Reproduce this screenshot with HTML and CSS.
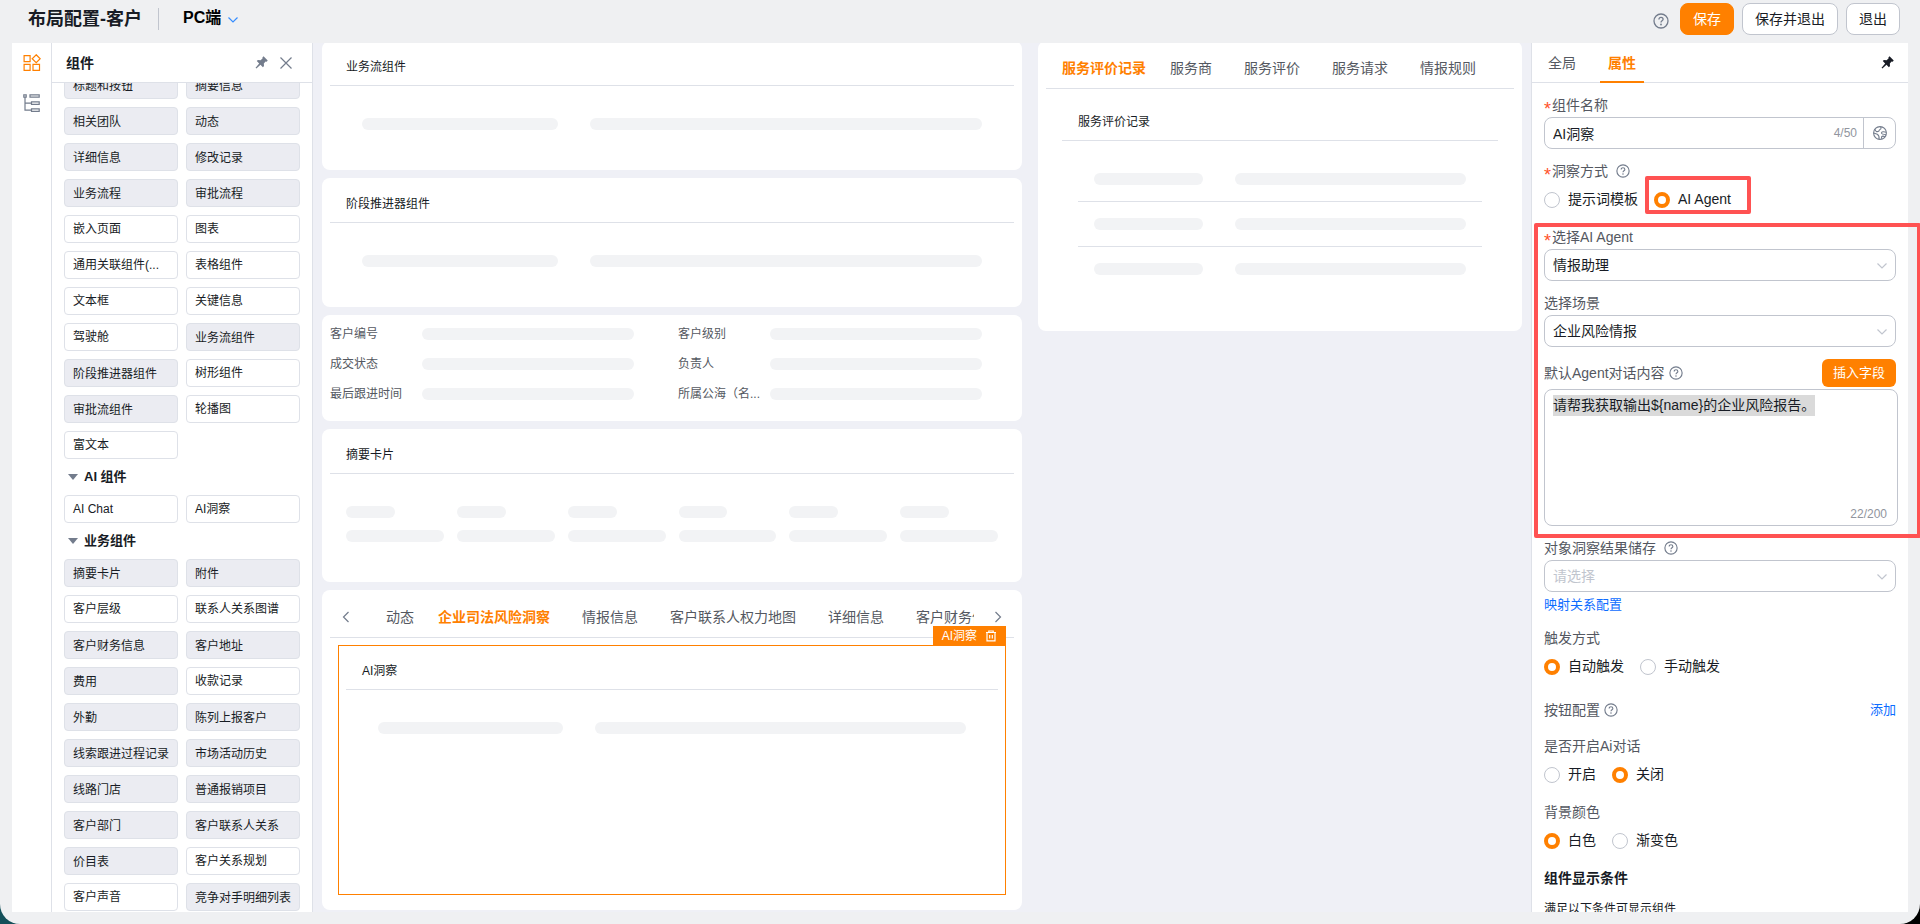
FILE: index.html
```html
<!DOCTYPE html>
<html lang="zh-CN">
<head>
<meta charset="utf-8">
<title>布局配置-客户</title>
<link rel="stylesheet" href="styles.css">
</head>
<body>
<svg class="sprite" aria-hidden="true">
  <symbol id="i-help" viewBox="0 0 16 16"><circle cx="8" cy="8" r="7" fill="none" stroke="currentColor" stroke-width="1.3"/><path d="M5.900 6.400C5.900 5.100 6.800 4.300 8 4.300s2.100.8 2.100 1.900c0 1.500-2.100 1.600-2.100 3.200" fill="none" stroke="currentColor" stroke-width="1.300"/><circle cx="8" cy="11.500" r=".9" fill="currentColor"/></symbol>
  <symbol id="i-pin" viewBox="0 0 14 14"><path d="M8 1.600 9.200.400l4.500 4.500-1.100 1.200-1.200-.2-1.900 2.100.2 2.900-1.200 1.200-2.600-2.600L1.500 13.500l-.9-.9 3.900-4.500L1.900 5.500l1.200-1.200 2.900.2 2.100-1.900z" fill="currentColor"/></symbol>
  <symbol id="i-down" viewBox="0 0 12 8"><path d="M1.500 1.500 6 6l4.500-4.500" fill="none" stroke="currentColor" stroke-width="1.200"/></symbol>
</svg>
<div class="page">
  <header class="topbar">
    <h1 class="topbar-title">布局配置-客户</h1>
    <button class="terminal" type="button">PC端<svg class="terminal-arrow"><use href="#i-down"/></svg></button>
    <div class="topbar-actions">
      <svg class="help help-large"><use href="#i-help"/></svg>
      <button class="btn btn-primary" type="button">保存</button>
      <button class="btn" type="button">保存并退出</button>
      <button class="btn" type="button">退出</button>
    </div>
  </header>

  <div class="workspace">
    <nav class="rail">
      <button class="rail-btn active" type="button" aria-label="组件"><svg viewBox="0 0 18 18"><g fill="none" stroke="currentColor" stroke-width="1.200"><path d="M1.100 1.600h6v6h-6zM1.100 10.400h6v6h-6zM10 10.400h6.500v6H10zM13.200.8l4 3.900-4 3.900-4-3.900z"/></g></svg></button>
      <button class="rail-btn" type="button" aria-label="大纲"><svg viewBox="0 0 18 18"><g fill="none" stroke="currentColor" stroke-width="1.200"><path d="M.8.800h2.400v2.400H.8zM7 .800h9.200v2.400H7zM8.500 7.800h7.700v2.600H8.500zM8.500 14.800h7.700v2.600H8.500zM2 3.200v12.900h6.500M2 9.100h6.500"/></g></svg></button>
    </nav>

    <section class="library">
      <div class="library-head">
        <h2>组件</h2>
        <button class="icon-btn" type="button" aria-label="固定"><svg class="pin"><use href="#i-pin"/></svg></button>
        <button class="icon-btn" type="button" aria-label="关闭"><svg class="close" viewBox="0 0 12 12"><path d="M.5.5l11 11M11.500.5l-11 11" fill="none" stroke="currentColor" stroke-width="1.200"/></svg></button>
      </div>
      <div class="library-scroll">
        <div class="chips chips-scrolled">
          <span class="chip used">标题和按钮</span><span class="chip used">摘要信息</span>
          <span class="chip used">相关团队</span><span class="chip used">动态</span>
          <span class="chip used">详细信息</span><span class="chip used">修改记录</span>
          <span class="chip used">业务流程</span><span class="chip used">审批流程</span>
          <span class="chip">嵌入页面</span><span class="chip">图表</span>
          <span class="chip">通用关联组件(...</span><span class="chip">表格组件</span>
          <span class="chip">文本框</span><span class="chip">关键信息</span>
          <span class="chip">驾驶舱</span><span class="chip used">业务流组件</span>
          <span class="chip used">阶段推进器组件</span><span class="chip">树形组件</span>
          <span class="chip used">审批流组件</span><span class="chip">轮播图</span>
          <span class="chip">富文本</span>
        </div>
        <h3 class="group">AI 组件</h3>
        <div class="chips">
          <span class="chip">AI Chat</span><span class="chip">AI洞察</span>
        </div>
        <h3 class="group">业务组件</h3>
        <div class="chips">
          <span class="chip used">摘要卡片</span><span class="chip used">附件</span>
          <span class="chip">客户层级</span><span class="chip">联系人关系图谱</span>
          <span class="chip used">客户财务信息</span><span class="chip used">客户地址</span>
          <span class="chip used">费用</span><span class="chip">收款记录</span>
          <span class="chip used">外勤</span><span class="chip used">陈列上报客户</span>
          <span class="chip used">线索跟进过程记录</span><span class="chip used">市场活动历史</span>
          <span class="chip used">线路门店</span><span class="chip used">普通报销项目</span>
          <span class="chip used">客户部门</span><span class="chip used">客户联系人关系</span>
          <span class="chip used">价目表</span><span class="chip">客户关系规划</span>
          <span class="chip">客户声音</span><span class="chip used">竞争对手明细列表</span>
        </div>
      </div>
    </section>

    <main class="canvas">
      <div class="column">
        <article class="card">
          <h4 class="card-title">业务流组件</h4>
          <div class="bars"><i class="bar"></i><i class="bar wide"></i></div>
        </article>
        <article class="card">
          <h4 class="card-title">阶段推进器组件</h4>
          <div class="bars"><i class="bar"></i><i class="bar wide"></i></div>
        </article>
        <article class="card summary">
          <div class="pair"><span>客户编号</span><i class="bar"></i></div><div class="pair"><span>客户级别</span><i class="bar"></i></div>
          <div class="pair"><span>成交状态</span><i class="bar"></i></div><div class="pair"><span>负责人</span><i class="bar"></i></div>
          <div class="pair"><span>最后跟进时间</span><i class="bar"></i></div><div class="pair"><span>所属公海（名...</span><i class="bar"></i></div>
        </article>
        <article class="card">
          <h4 class="card-title">摘要卡片</h4>
          <div class="stats">
            <div class="stat"><i class="bar half"></i><i class="bar"></i></div>
            <div class="stat"><i class="bar half"></i><i class="bar"></i></div>
            <div class="stat"><i class="bar half"></i><i class="bar"></i></div>
            <div class="stat"><i class="bar half"></i><i class="bar"></i></div>
            <div class="stat"><i class="bar half"></i><i class="bar"></i></div>
            <div class="stat"><i class="bar half"></i><i class="bar"></i></div>
          </div>
        </article>
        <article class="card">
          <div class="tabbar">
            <button class="tab-arrow prev" type="button" aria-label="上一页"><svg viewBox="0 0 8 12"><path d="M6.500 1 1.500 6l5 5" fill="none" stroke="currentColor" stroke-width="1.200"/></svg></button>
            <div class="tabs tabs-paged">
              <button class="tab" type="button">动态</button>
              <button class="tab active" type="button">企业司法风险洞察</button>
              <button class="tab" type="button">情报信息</button>
              <button class="tab" type="button">客户联系人权力地图</button>
              <button class="tab" type="button">详细信息</button>
              <button class="tab" type="button">客户财务信息</button>
            </div>
            <button class="tab-arrow" type="button" aria-label="下一页"><svg viewBox="0 0 8 12"><path d="M1.500 1l5 5-5 5" fill="none" stroke="currentColor" stroke-width="1.200"/></svg></button>
          </div>
          <div class="selected">
            <div class="badge">AI洞察<svg viewBox="0 0 12 12"><path d="M1 2.500h10M3.800 2.300V1h4.400v1.300M2 2.700v8.200h8V2.700M4.700 5v3.500M7.300 5v3.500" fill="none" stroke="currentColor" stroke-width="1.200"/></svg></div>
            <h4 class="card-title">AI洞察</h4>
            <div class="bars"><i class="bar"></i><i class="bar wide"></i></div>
          </div>
        </article>
      </div>

      <div class="column">
        <article class="card">
          <div class="tabbar">
            <div class="tabs">
              <button class="tab active" type="button">服务评价记录</button>
              <button class="tab" type="button">服务商</button>
              <button class="tab" type="button">服务评价</button>
              <button class="tab" type="button">服务请求</button>
              <button class="tab" type="button">情报规则</button>
            </div>
          </div>
          <div class="nested">
            <h4 class="card-title">服务评价记录</h4>
            <div class="rows">
              <div class="row"><i class="bar"></i><i class="bar wide"></i></div>
              <div class="row"><i class="bar"></i><i class="bar wide"></i></div>
              <div class="row"><i class="bar"></i><i class="bar wide"></i></div>
            </div>
          </div>
        </article>
      </div>
    </main>

    <aside class="props">
      <div class="props-tabs">
        <button class="props-tab" type="button">全局</button>
        <button class="props-tab active" type="button">属性</button>
        <button class="icon-btn dark" type="button" aria-label="固定"><svg class="pin"><use href="#i-pin"/></svg></button>
      </div>
      <form class="form">
        <div class="field">
          <label class="label required" for="name">组件名称</label>
          <div class="input-group">
            <input class="input" id="name" type="text" value="AI洞察">
            <span class="count">4/50</span>
            <button class="addon" type="button" aria-label="多语言"><svg viewBox="0 0 14 14"><g fill="none" stroke="currentColor" stroke-width="1.100"><circle cx="7" cy="7" r="6.400"/><path d="M1.800 3.200c.7 2.300 2 2.900 3.900 2.100.6-1.700 1.200-1.600 2.100-2.500C8.300 2 7.800 1.300 7.800.7M.7 6.900l3.600 1.400c1.600.9 2.100 2.600 1.700 5M13.300 6.200c-2.700-.9-4.600-.6-4.900.8.300 1.300 2.200 1.500 4.700 1.700M11.900 10.800c-1.400-.9-2.700-.9-3.300.1-.2.800 0 1.500.4 2.100"/></g></svg></button>
          </div>
        </div>
        <div class="field">
          <span class="label required">洞察方式<svg class="help spaced"><use href="#i-help"/></svg></span>
          <div class="radios">
            <label><input type="radio" name="mode">提示词模板</label>
            <label><input type="radio" name="mode" checked>AI Agent</label>
          </div>
        </div>
        <div class="field">
          <label class="label required" for="agent">选择AI Agent</label>
          <div class="select-box"><select class="select" id="agent"><option>情报助理</option></select><svg><use href="#i-down"/></svg></div>
        </div>
        <div class="field">
          <label class="label" for="scene">选择场景</label>
          <div class="select-box"><select class="select" id="scene"><option>企业风险情报</option></select><svg><use href="#i-down"/></svg></div>
        </div>
        <div class="field">
          <div class="label-row">
            <label class="label" for="prompt">默认Agent对话内容<svg class="help"><use href="#i-help"/></svg></label>
            <button class="btn-insert" type="button">插入字段</button>
          </div>
          <div class="textarea-box">
            <textarea class="textarea" id="prompt" spellcheck="false">请帮我获取输出${name}的企业风险报告。</textarea>
            <span class="textarea-count">22/200</span>
          </div>
        </div>
        <div class="field linked">
          <label class="label" for="store">对象洞察结果储存<svg class="help spaced"><use href="#i-help"/></svg></label>
          <div class="select-box"><select class="select empty" id="store"><option>请选择</option></select><svg><use href="#i-down"/></svg></div>
          <a class="link mapping" href="#">映射关系配置</a>
        </div>
        <div class="field trigger">
          <span class="label">触发方式</span>
          <div class="radios">
            <label><input type="radio" name="trigger" checked>自动触发</label>
            <label><input type="radio" name="trigger">手动触发</label>
          </div>
        </div>
        <div class="field buttons">
          <span class="label">按钮配置<svg class="help"><use href="#i-help"/></svg></span>
          <a class="link" href="#">添加</a>
        </div>
        <div class="field">
          <span class="label">是否开启Ai对话</span>
          <div class="radios">
            <label><input type="radio" name="chat">开启</label>
            <label><input type="radio" name="chat" checked>关闭</label>
          </div>
        </div>
        <div class="field">
          <span class="label">背景颜色</span>
          <div class="radios">
            <label><input type="radio" name="bg" checked>白色</label>
            <label><input type="radio" name="bg">渐变色</label>
          </div>
        </div>
        <h3 class="section">组件显示条件</h3>
        <p class="note">满足以下条件可显示组件</p>
      </form>
      <div class="mark mark-mode"></div>
      <div class="mark mark-agent"></div>
    </aside>
  </div>
</div>
</body>
</html>
```

FILE: styles.css
```css
* { box-sizing: border-box; }

body {
  margin: 0;
  height: 100vh;
  overflow: hidden;
  background: linear-gradient(90deg, #14505a 0, #14505a 24px, #000 48px);
  color: #181c25;
  font: 14px/20px "Liberation Sans", "Noto Sans CJK SC", sans-serif;
}

button, input, select, textarea { font: inherit; color: inherit; }
button { padding: 0; border: 0; background: none; white-space: nowrap; cursor: pointer; }
h1, h2, h3, h4, p { margin: 0; }
svg { display: block; flex: none; }
.sprite { position: absolute; width: 0; height: 0; }

.page {
  display: flex;
  flex-direction: column;
  height: 100%;
  padding: 0 12px 12px;
  border-radius: 0 0 20px 20px;
  background: #eff0f2;
}

/* Top bar */
.topbar { display: flex; flex: none; height: 43px; padding: 3px 8px 0 16px; }
.topbar-title {
  height: 22px;
  margin-top: 5px;
  padding-right: 16px;
  border-right: 1px solid #c1c5ce;
  font-size: 18px;
  font-weight: 600;
  line-height: 22px;
}
.terminal {
  display: flex;
  align-items: center;
  gap: 6px;
  height: 24px;
  margin: 3px 0 0 24px;
  color: #000;
  font-size: 16px;
  font-weight: 600;
}
.terminal-arrow { width: 12px; height: 8px; margin-top: 3px; color: #368dff; }
.topbar-actions { display: flex; gap: 8px; margin-left: auto; }
.help { width: 14px; height: 14px; color: #737c8c; }
.help-large { width: 16px; height: 16px; margin: 10px 3px 0 0; }
.btn {
  height: 32px;
  padding: 0 12px;
  border: 1px solid #c1c5ce;
  border-radius: 8px;
  background: #fff;
}
.btn-primary { border-color: #ff8000; background: #ff8000; color: #fff; }

.workspace { display: flex; flex: 1; min-height: 0; }

/* Icon rail */
.rail {
  display: flex;
  flex: none;
  flex-direction: column;
  align-items: center;
  gap: 22px;
  width: 40px;
  padding-top: 11px;
  border-right: 1px solid #dee1e8;
  background: #fff;
}
.rail-btn { color: #737c8c; }
.rail-btn svg { width: 18px; height: 18px; }
.rail-btn.active { color: #ff8000; }

/* Component library */
.library {
  display: flex;
  flex: none;
  flex-direction: column;
  width: 261px;
  border-right: 1px solid #dee1e8;
  background: #fff;
}
.library-head {
  display: flex;
  flex: none;
  align-items: center;
  gap: 12px;
  height: 40px;
  padding: 0 20px 0 14px;
  border-bottom: 1px solid #dee1e8;
}
.library-head h2 { margin-right: auto; font-size: 14px; font-weight: 600; }
.icon-btn { color: #737c8c; }
.icon-btn.dark { color: #181c25; }
.pin { width: 13px; height: 13px; }
.close { width: 12px; height: 12px; }
.library-scroll { flex: 1; min-height: 0; padding: 0 12px; overflow: hidden; }
.chips { display: grid; grid-template-columns: 1fr 1fr; gap: 8px; }
.chips-scrolled { margin-top: -12px; }
.chip {
  height: 28px;
  padding: 0 8px;
  border: 1px solid #dee1e8;
  border-radius: 4px;
  font-size: 12px;
  line-height: 26px;
  white-space: nowrap;
}
.chip.used { background: #ebecf2; line-height: 28px; }
.group {
  display: flex;
  align-items: center;
  gap: 6px;
  height: 36px;
  padding-left: 4px;
  font-size: 13px;
  font-weight: 600;
}
.group::before {
  content: "";
  border: 5px solid transparent;
  border-top: 6px solid #737c8c;
  border-bottom: 0;
}

/* Canvas */
.canvas {
  display: grid;
  flex: 1;
  grid-template-columns: minmax(0, 175fr) minmax(0, 121fr);
  align-items: start;
  gap: 16px;
  min-width: 0;
  padding: 0 9px;
  overflow: hidden;
  background: #eff0f6;
}
.column { display: grid; grid-template-columns: minmax(0, 1fr); gap: 8px; margin-top: -2px; }
.card { padding: 0 8px; border-radius: 8px; background: #fff; }
.card-title {
  height: 45px;
  padding: 6px 16px 0;
  border-bottom: 1px solid #dee1e8;
  font-size: 12px;
  font-weight: 400;
  line-height: 40px;
}
.bar { display: block; flex: 1; height: 12px; border-radius: 6px; background: #f2f3f5; }
.bar.wide { flex: 2; }
.bars { display: flex; gap: 32px; padding: 32px 32px 40px; }
.summary { display: grid; grid-template-columns: 1fr 1fr; gap: 18px 44px; padding: 13px 40px 21px 8px; }
.pair { display: flex; align-items: center; height: 12px; color: #545861; font-size: 12px; }
.pair span { width: 92px; white-space: nowrap; }
.stats { display: grid; grid-template-columns: repeat(6, 1fr); gap: 13px; padding: 32px 16px 40px; }
.stat { display: grid; gap: 12px; }
.half { width: 50%; }

.tabbar { display: flex; align-items: center; height: 48px; border-bottom: 1px solid #dee1e8; }
.tabs { display: flex; gap: 32px; padding: 7px 16px 0; overflow: hidden; }
.tabs-paged { flex: 1; min-width: 0; margin: 0 20px 0 36px; padding: 7px 0 0; }
.tab { color: #545861; }
.tab:first-child { margin-right: -8px; }
.tab.active { color: #ff8000; font-weight: 600; }
.tab-arrow { width: 20px; padding-top: 6px; color: #737c8c; }
.tab-arrow.prev { padding-left: 12px; }
.tab-arrow svg { width: 8px; height: 12px; }

.selected {
  position: relative;
  min-height: 250px;
  margin: 7px 8px 15px;
  padding: 0 7px;
  border: 1px solid #ff8000;
}
.selected .card-title { height: 44px; padding-top: 5px; }
.badge {
  position: absolute;
  right: -1px;
  bottom: 100%;
  display: flex;
  align-items: center;
  gap: 8px;
  height: 20px;
  padding: 0 9px;
  background: #ff8000;
  color: #fff;
  font-size: 12px;
}
.badge svg { width: 12px; height: 12px; }

.nested { margin: 7px 8px 0; padding: 0 8px 40px; }
.rows { padding: 16px 16px 0; }
.row { display: flex; gap: 32px; padding: 16px; border-bottom: 1px solid #dee1e8; }
.row:last-child { border-bottom: 0; }
.row .bar { flex: 8; }
.row .bar.wide { flex: 17; }

/* Properties */
.props {
  position: relative;
  display: flex;
  flex: none;
  flex-direction: column;
  width: 377px;
  border-left: 1px solid #dee1e8;
  background: #fff;
}
.props-tabs {
  display: flex;
  flex: none;
  gap: 16px;
  height: 40px;
  padding: 0 14px 0 8px;
  border-bottom: 1px solid #dee1e8;
}
.props-tab { height: 40px; padding: 0 8px; color: #545861; }
.props-tab.active { border-bottom: 2px solid #ff8000; padding-top: 2px; color: #ff8000; font-weight: 600; }
.props-tabs .icon-btn { margin-left: auto; }
.form { flex: 1; min-height: 0; padding: 10px 12px 0; overflow: hidden; }
.field { margin-bottom: 10px; }
.label { display: flex; align-items: center; gap: 4px; height: 24px; color: #545861; }
.label.required::before {
  content: "*";
  width: 8px;
  height: 24px;
  margin-right: -4px;
  color: #ff522a;
  font-size: 18px;
  line-height: 32px;
}
.spaced { margin-left: 4px; }
.input-group {
  display: flex;
  align-items: center;
  height: 32px;
  border: 1px solid #c1c5ce;
  border-radius: 8px;
}
.input { flex: 1; min-width: 0; height: 30px; padding: 0 8px; border: 0; background: none; outline: 0; }
.count { padding-right: 6px; color: #91959e; font-size: 12px; }
.addon { display: grid; place-items: center; width: 32px; height: 30px; border-left: 1px solid #c1c5ce; color: #737c8c; }
.addon svg { width: 14px; height: 14px; }

.radios { display: flex; gap: 16px; height: 32px; }
.radios label { display: flex; align-items: center; gap: 8px; }
.radios input {
  width: 16px;
  height: 16px;
  margin: 1px 0 0;
  border: 1px solid #c1c5ce;
  border-radius: 50%;
  background: #fff;
  appearance: none;
}
.radios input:checked { border: 4px solid #ff8000; }

.select-box { position: relative; }
.select {
  display: block;
  width: 100%;
  height: 32px;
  padding: 0 32px 0 8px;
  border: 1px solid #c1c5ce;
  border-radius: 8px;
  background: #fff;
  appearance: none;
}
.select.empty { color: #c1c5ce; }
.select-box svg { position: absolute; top: 13px; right: 8px; width: 12px; height: 8px; color: #c1c5ce; pointer-events: none; }

.label-row { display: flex; align-items: center; justify-content: space-between; height: 32px; }
.btn-insert { height: 28px; padding: 0 11px; border-radius: 6px; background: #ff8000; color: #fff; font-size: 13px; }
.textarea-box { position: relative; margin-right: -2px; }
.textarea {
  display: block;
  width: 100%;
  height: 137px;
  padding: 5px 8px;
  border: 1px solid #c1c5ce;
  border-radius: 8px;
  background: linear-gradient(#dadada, #dadada) 8px 5px / 262px 21px no-repeat;
  line-height: 21px;
  outline: 0;
  resize: none;
}
.textarea-count { position: absolute; right: 11px; bottom: 2px; color: #91959e; font-size: 12px; }
.link { color: #0c6cff; font-size: 13px; text-decoration: none; }
.mapping { display: block; line-height: 26px; }
.linked { margin-bottom: 8px; }
.trigger { margin-bottom: 16px; }
.buttons { display: flex; align-items: center; justify-content: space-between; margin-bottom: 12px; }
.section { font-size: 14px; font-weight: 600; line-height: 24px; }
.note { margin-top: 10px; font-size: 12px; line-height: 18px; }

/* Highlight frames over the form */
.mark { position: absolute; border: 4px solid #ff5252; border-radius: 2px; pointer-events: none; }
.mark-mode { top: 133px; left: 113px; width: 106px; height: 38px; }
.mark-agent { top: 180px; right: -13px; left: 2px; height: 315px; }
```
